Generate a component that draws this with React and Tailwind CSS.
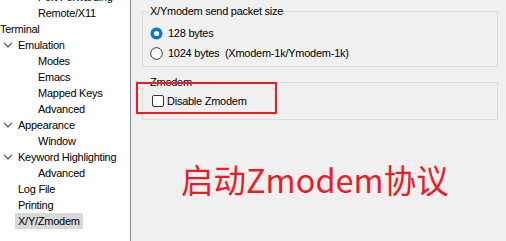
import React from "react";

const Chevron = () => (
  <svg width="10" height="6" viewBox="0 0 10 6" className="block">
    <polyline points="1,0.8 5,4.8 9,0.8" fill="none" stroke="#4a4a4a" strokeWidth="1.2" />
  </svg>
);

const rows = [
  { t: "Port Forwarding", lvl: 2 },
  { t: "Remote/X11", lvl: 2 },
  { t: "Terminal", lvl: 0 },
  { t: "Emulation", lvl: 1, chev: true },
  { t: "Modes", lvl: 2 },
  { t: "Emacs", lvl: 2 },
  { t: "Mapped Keys", lvl: 2 },
  { t: "Advanced", lvl: 2 },
  { t: "Appearance", lvl: 1, chev: true },
  { t: "Window", lvl: 2 },
  { t: "Keyword Highlighting", lvl: 1, chev: true },
  { t: "Advanced", lvl: 2 },
  { t: "Log File", lvl: 1 },
  { t: "Printing", lvl: 1 },
  { t: "X/Y/Zmodem", lvl: 1, sel: true },
];

function TreeRow({ r }) {
  return (
    <div className="flex h-4 items-center whitespace-nowrap">
      {r.lvl === 0 && <span className="pl-0">{r.t}</span>}
      {r.lvl === 1 && (
        <>
          <span className="flex w-[18px] shrink-0 justify-start pl-[3px]">{r.chev ? <Chevron /> : null}</span>
          <span className={r.sel ? "-ml-[3px] bg-[#d9d9d9] px-[3px] leading-4" : ""}>{r.t}</span>
        </>
      )}
      {r.lvl === 2 && <span className="pl-[38px]">{r.t}</span>}
    </div>
  );
}

export default function App() {
  return (
    <div
      className="relative flex h-[241px] w-[506px] overflow-hidden bg-[#f0f0f0] text-[11px] tracking-[-0.25px] text-black"
      style={{ fontFamily: '"Liberation Sans", Arial, sans-serif' }}
    >
      <div className="h-full w-[131px] shrink-0 overflow-hidden border-r border-[#828790] bg-white">
        <div className="-mt-[11px] flex flex-col">
          {rows.map((r, i) => (
            <TreeRow key={i} r={r} />
          ))}
        </div>
      </div>
      <div className="flex flex-1 flex-col pl-[11px] pr-[8px]">
        <fieldset className="mt-[3px] border border-[#dcdcdc] px-[6px] pb-[3px]">
          <legend className="px-[1px] leading-4">X/Ymodem send packet size</legend>
          <div className="mt-[4px] flex h-5 items-center gap-[5px] pl-[1px]">
            <svg width="13" height="13" viewBox="0 0 13 13">
              <circle cx="6.5" cy="6.5" r="6" fill="#0078d7" />
              <circle cx="6.5" cy="6.5" r="2.6" fill="#ffffff" />
            </svg>
            <span>128 bytes</span>
          </div>
          <div className="flex h-5 items-center gap-[5px] pl-[1px]">
            <svg width="13" height="13" viewBox="0 0 13 13">
              <circle cx="6.5" cy="6.5" r="5.8" fill="#ffffff" stroke="#333333" strokeWidth="1" />
            </svg>
            <span className="whitespace-pre">1024 bytes  (Xmodem-1k/Ymodem-1k)</span>
          </div>
        </fieldset>
        <fieldset className="mt-[7px] border border-[#dcdcdc] px-[6px] pb-[8px]">
          <legend className="px-[1px] leading-4">Zmodem</legend>
          <div className="mt-[1px] flex h-5 items-center gap-[3px] pl-[3px]">
            <span className="block h-[12px] w-[12px] rounded-[2px] border border-[#333333] bg-white" />
            <span>Disable Zmodem</span>
          </div>
        </fieldset>
        <div
          className="ml-[39px] mt-[40px] text-[32.5px] leading-[38px] tracking-normal text-[#ec1c24]"
          style={{ fontFamily: '"Noto Sans CJK SC", "Noto Sans", sans-serif' }}
        >
          启动Zmodem协议
        </div>
      </div>
      <div className="pointer-events-none absolute left-[136px] top-[82px] h-[32px] w-[141px] border-2 border-[#ec1c24]" />
    </div>
  );
}
